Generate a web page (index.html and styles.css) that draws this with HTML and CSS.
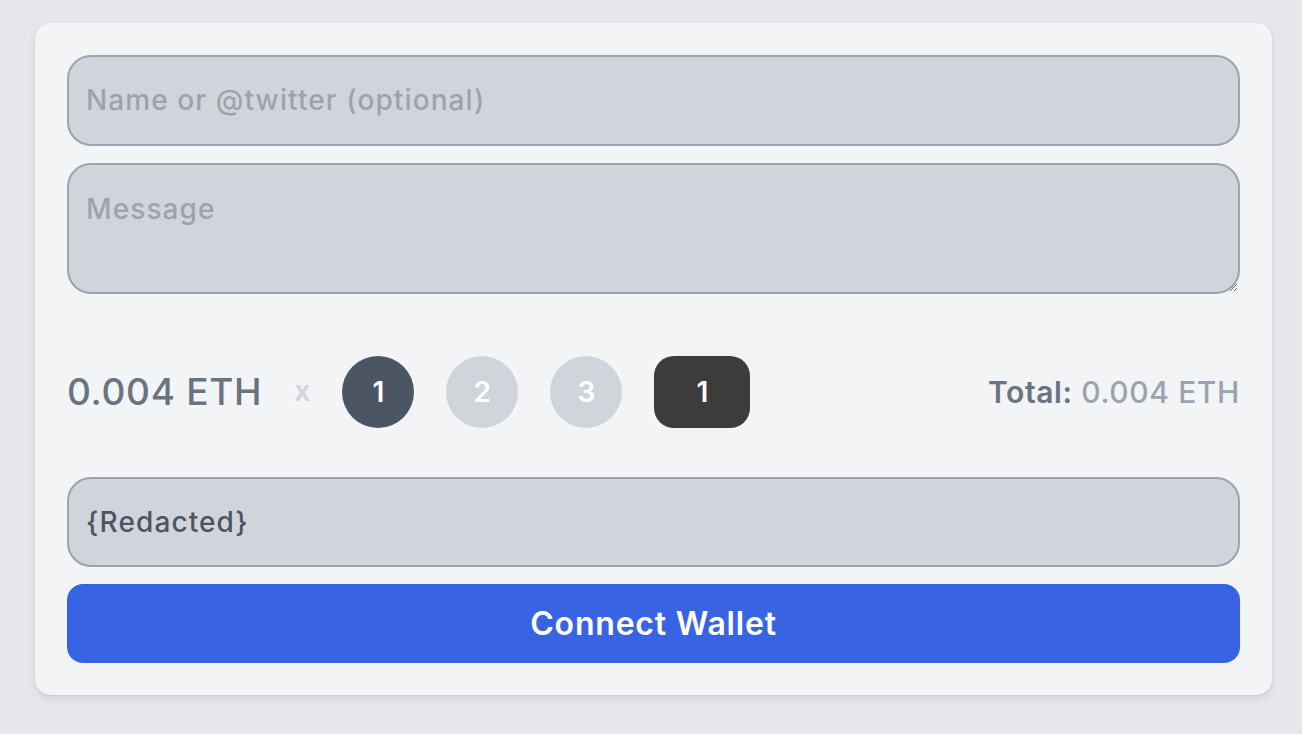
FILE: index.html
```html
<!DOCTYPE html>
<html lang="en">
<head>
<meta charset="utf-8">
<title>Donate</title>
<link rel="stylesheet" href="styles.css">
</head>
<body>
<div class="page">
  <form class="card">
    <input class="field" type="text" placeholder="Name or @twitter (optional)">
    <textarea class="field area" placeholder="Message"></textarea>
    <div class="qty-row">
      <div class="price">0.004 ETH</div>
      <div class="times">x</div>
      <div class="qty active">1</div>
      <div class="qty">2</div>
      <div class="qty">3</div>
      <div class="qty custom">1</div>
      <div class="total"><span class="total-label">Total:</span> <span class="total-value">0.004 ETH</span></div>
    </div>
    <div class="field redacted">{Redacted}</div>
    <button class="connect" type="button">Connect Wallet</button>
  </form>
</div>
</body>
</html>
```
FILE: styles.css
```css
* { box-sizing: border-box; }
html, body { margin: 0; padding: 0; }
body {
  background: #e5e7eb;
  font-family: "Inter", "Noto Sans", sans-serif;
  width: 1302px;
  height: 734px;
  overflow: hidden;
}
.page {
  padding: 23px 30px 0 35px;
}
.card {
  width: 1237px;
  height: 672px;
  background: #f3f4f6;
  border-radius: 16px;
  box-shadow: 0 4px 8px rgba(0,0,0,0.08), 0 1px 3px rgba(0,0,0,0.06);
  padding: 32px;
  display: flex;
  flex-direction: column;
}
.field {
  display: block;
  width: 100%;
  background: #d1d5db;
  border: 2px solid #9ca3af;
  border-radius: 24px;
  font-family: inherit;
  font-size: 28px;
  font-weight: 500;
  letter-spacing: 1.1px;
  color: #4b5563;
  outline: none;
  margin: 0;
}
.field::placeholder { color: #9ca3af; }
input.field {
  height: 91px;
  padding: 0 17px;
}
.area {
  margin-top: 17px;
  height: 131px;
  padding: 26px 17px;
  line-height: 36px;
  resize: vertical;
}
.qty-row {
  display: flex;
  align-items: center;
  height: 72px;
  margin-top: 62px;
  margin-bottom: 49px;
}
.price {
  font-size: 37px;
  font-weight: 500;
  color: #6b7280;
  letter-spacing: 0.7px;
}
.times {
  font-size: 28px;
  font-weight: 600;
  color: #d1d5db;
  margin-left: 32px;
  margin-right: 32px;
  padding-bottom: 2px;
}
.qty {
  width: 72px;
  height: 72px;
  border-radius: 50%;
  background: #d1d5db;
  color: #ffffff;
  font-size: 28px;
  font-weight: 600;
  display: flex;
  align-items: center;
  justify-content: center;
  margin-right: 32px;
}
.qty.active { background: #4b5563; }
.qty.custom {
  width: 96px;
  border-radius: 20px;
  background: #3c3c3c;
}
.total {
  margin-left: auto;
  font-size: 30px;
  font-weight: 500;
  letter-spacing: 0.6px;
  color: #9ca3af;
}
.total-label {
  font-weight: 600;
  color: #6b7280;
}
.redacted {
  height: 91px;
  padding: 0 17px;
  display: flex;
  align-items: center;
}
.connect {
  margin-top: 17px;
  height: 79px;
  width: 100%;
  border: none;
  border-radius: 16px;
  background: #3864e4;
  color: #ffffff;
  font-family: inherit;
  font-size: 32px;
  font-weight: 600;
  letter-spacing: 0.8px;
  cursor: pointer;
}
```
